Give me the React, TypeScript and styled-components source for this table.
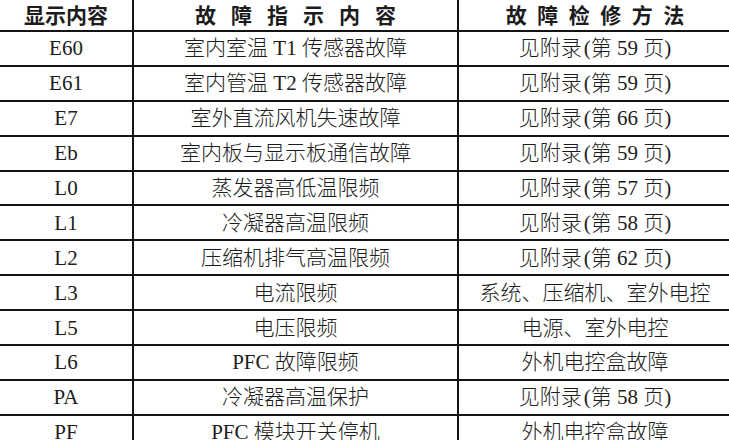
import { styled, createGlobalStyle } from 'styled-components';

const GlobalStyle = createGlobalStyle`
    html, body {
        margin: 0;
        padding: 0;
        background: #ffffff;
        overflow: hidden;
        height: 440px;
    }
`;

const Sheet = styled.div`
    display: grid;
    grid-template-columns: 134px 325px 274px;
    grid-auto-rows: 34.9px;
    grid-template-rows: 32px;
    width: 735px;
    margin-left: -2px;
    border-left: 2px solid #141414;
    color: #1c1c1c;
`;

const HeadCell = styled.div<{ $spread: number }>`
    display: flex;
    align-items: center;
    justify-content: center;
    box-sizing: border-box;
    border-right: 2px solid #141414;
    border-bottom: 2px solid #141414;
    padding-left: ${(p) => p.$spread}px;
    padding-bottom: 1px;
    font-family: "Noto Sans CJK SC", sans-serif;
    font-weight: 700;
    font-size: 21px;
    line-height: 1;
    letter-spacing: ${(p) => p.$spread}px;
    white-space: nowrap;
`;

const Cell = styled.div`
    display: flex;
    align-items: center;
    justify-content: center;
    box-sizing: border-box;
    border-right: 2px solid #141414;
    border-bottom: 2px solid #141414;
    padding-top: 1px;
    font-family: "Liberation Serif", "Noto Sans CJK SC", serif;
    font-weight: 300;
    font-size: 21px;
    line-height: 1;
    white-space: nowrap;
`;

// the bracket in the source sits a little apart from the text before it
const Paren = styled.span`
    margin-left: 2px;
`;

const rows: [string, string, string][] = [
    ['E60', '室内室温 T1 传感器故障', '见附录(第 59 页)'],
    ['E61', '室内管温 T2 传感器故障', '见附录(第 59 页)'],
    ['E7', '室外直流风机失速故障', '见附录(第 66 页)'],
    ['Eb', '室内板与显示板通信故障', '见附录(第 59 页)'],
    ['L0', '蒸发器高低温限频', '见附录(第 57 页)'],
    ['L1', '冷凝器高温限频', '见附录(第 58 页)'],
    ['L2', '压缩机排气高温限频', '见附录(第 62 页)'],
    ['L3', '电流限频', '系统、压缩机、室外电控'],
    ['L5', '电压限频', '电源、室外电控'],
    ['L6', 'PFC 故障限频', '外机电控盒故障'],
    ['PA', '冷凝器高温保护', '见附录(第 58 页)'],
    ['PF', 'PFC 模块开关停机', '外机电控盒故障'],
];

function Fix({ text }: { text: string }) {
    const i = text.indexOf('(');
    if (i < 0) return <>{text}</>;
    return (
        <>
            {text.slice(0, i)}
            <Paren>{text.slice(i)}</Paren>
        </>
    );
}

export default function App() {
    return (
        <>
            <GlobalStyle />
            <Sheet>
                <HeadCell $spread={0}>显示内容</HeadCell>
                <HeadCell $spread={15}>故障指示内容</HeadCell>
                <HeadCell $spread={10.5}>故障检修方法</HeadCell>
                {rows.map(([code, fault, fix]) => (
                    <>
                        <Cell key={code + 'a'}>{code}</Cell>
                        <Cell key={code + 'b'}>{fault}</Cell>
                        <Cell key={code + 'c'}>
                            <Fix text={fix} />
                        </Cell>
                    </>
                ))}
            </Sheet>
        </>
    );
}
